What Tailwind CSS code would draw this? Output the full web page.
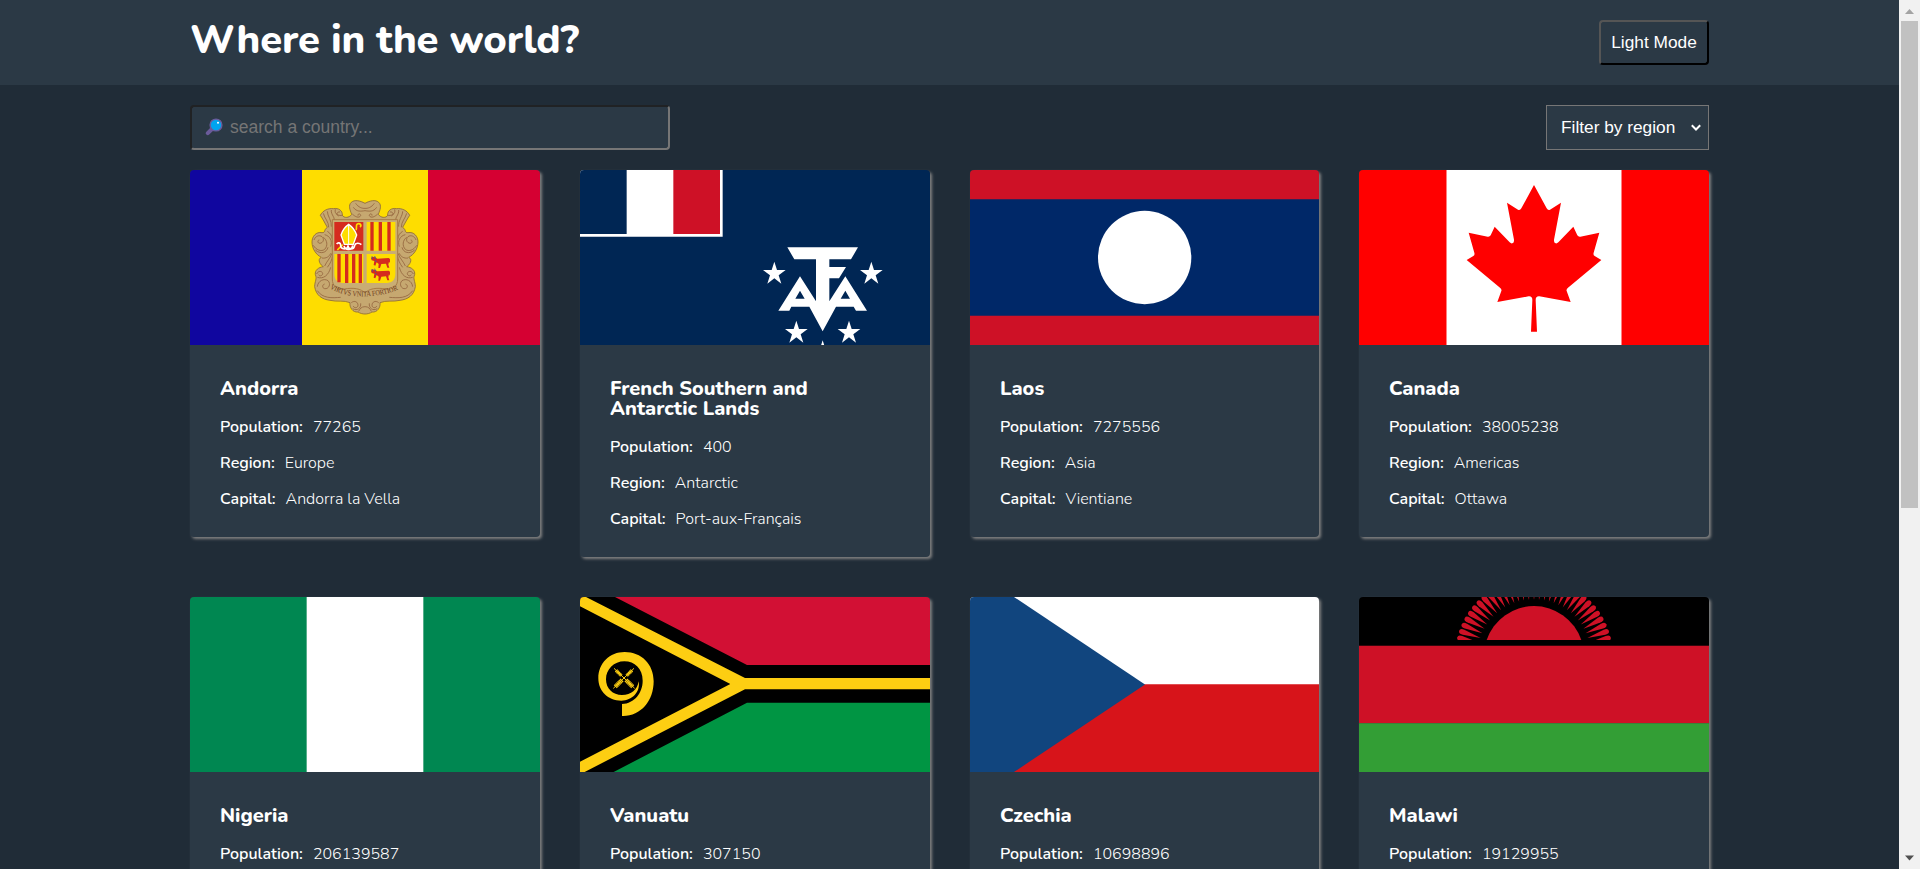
<!DOCTYPE html>
<html lang="en">
<head>
<meta charset="utf-8">
<title>Where in the world?</title>
<script src="https://cdn.jsdelivr.net/npm/@tailwindcss/browser@4"></script>
</head>
<body class="flex h-[869px] overflow-hidden bg-[#202c37] font-['Nunito','Lato',sans-serif] text-white">
<div class="h-full min-w-0 flex-1 overflow-hidden">
  <header class="flex h-[85px] items-start justify-between bg-[#2b3945] px-[190px] pt-5">
    <h1 class="text-[40px] leading-10 font-extrabold tracking-[-0.12px] whitespace-nowrap">Where in the world?</h1>
    <button class="h-[45px] w-[110px] rounded border-2 border-t-[#555] border-l-[#555] border-r-black border-b-black bg-[#2b3945] font-['Liberation_Sans',sans-serif] text-[17.3px] whitespace-nowrap">Light Mode</button>
  </header>
  <main class="px-[190px] pt-5">
    <div class="flex justify-between">
      <div class="flex h-[45px] w-[480px] items-center gap-[7px] rounded border-2 border-t-[#202224] border-l-[#202224] border-r-[#767676] border-b-[#767676] bg-[#2b3945] pl-[13px] font-['Liberation_Sans',sans-serif] text-[17.5px] text-[#757575]">
        <svg class="-mt-0.5 h-[18px] w-[18px]" viewBox="0 0 18 18"><path d="M2.800 15.200 7 11" stroke="#6b5b9b" stroke-width="4" stroke-linecap="round"/><circle cx="11" cy="7" r="5.900" fill="#00a4ef" stroke="#6b5b9b" stroke-width="1.400"/><circle cx="13" cy="4.800" r="1" fill="#fff"/></svg>
        <span>search a country...</span>
      </div>
      <div class="flex h-[45px] w-[163px] items-center justify-between border border-[#767676] bg-[#2b3945] pr-[7px] pl-[14px] font-['Liberation_Sans',sans-serif] text-[17.3px] whitespace-nowrap">
        <span class="pt-px">Filter by region</span>
        <svg class="h-[10px] w-[10px]" viewBox="0 0 10 10"><path d="M.8 2.300 5 6.500l4.200-4.200" fill="none" stroke="#fff" stroke-width="2"/></svg>
      </div>
    </div>
    <section id="grid" class="mt-5 grid grid-cols-[350px_350px_349px_350px] items-start justify-between gap-y-10"></section>
  </main>
</div>
<aside class="flex w-[21px] shrink-0 flex-col items-center bg-[#f1f1f1]">
  <svg class="h-[21px] w-[21px] shrink-0" viewBox="0 0 21 21"><path d="M6 14l4.500-5 4.500 5z" fill="#a3a3a3"/></svg>
  <div class="h-[487px] w-[17px] bg-[#c1c1c1]"></div>
  <svg class="mt-auto h-[21px] w-[21px] shrink-0" viewBox="0 0 21 21"><path d="M6 7.500l4.500 5 4.500-5z" fill="#505050"/></svg>
</aside>

<svg class="hidden">
  <symbol id="andorra" viewBox="0 0 1050 525">
    <path fill="#10069f" d="M0 0h336v525H0z"/><path fill="#fedd00" d="M336 0h378v525H336z"/><path fill="#d50032" d="M714 0h336v525H714z"/>
    <path fill="#c6a870" stroke="#8c6a3a" stroke-width="2.500" d="M525 100C510 92 494 88 484 97C474 106 480 120 485 133C478 144 462 145 457 136C458 122 446 113 430 116C414 114 398 122 391 136C398 146 404 158 412 172C400 180 408 188 396 188C378 184 366 200 366 216C366 236 378 254 394 262C380 268 392 286 400 290C386 292 374 300 376 314C382 326 374 334 374 350C378 376 396 388 420 391C440 396 462 390 480 398C478 412 488 428 504 426C510 430 518 432 525 432C532 432 540 430 546 426C562 428 572 412 570 398C588 390 610 396 630 391C654 388 672 376 676 350C676 334 668 326 674 314C676 300 664 292 650 290C658 286 670 268 656 262C672 254 684 236 684 216C684 200 672 184 654 188C642 188 650 180 638 172C646 158 652 146 659 136C652 122 636 114 620 116C604 113 592 122 593 136C588 145 572 144 565 133C570 120 576 106 566 97C556 88 540 92 525 100z"/>
    <g id="scroll" fill="none" stroke="#94653f" stroke-width="2.500">
      <path d="M497 100c8 12 20 16 28 15M490 112c10 14 22 12 35 10M487 132c8 8 20 14 25 5c0-8-10-6-8 0M400 130c4 16 16 24 16 42M412 124c0 14 14 28 12 46M424 120c-2 16 14 20 8 42M436 118c-4 16 12 20 22 18M450 126c-8-2-14 8-4 12M372 210c4-12 16-16 24-10 8 8 4 18-6 20-8 0-8-10-2-10M370 226c8 14 24 20 34 12 10-10 8-28-4-36M376 240c16 14 34 8 38-8M404 194c16 4 24 18 18 36M412 184c10 6 14 14 14 22M396 264c12 2 22-4 26-14M404 288c6-14 16-22 22-38M412 292c8-10 14-22 16-36M380 312c4-10 16-10 18-2 0 8-10 10-12 4M382 322c18 6 34-6 40-30M382 350c2-18 20-26 32-18 10 10 2 26-10 24-8-2-8-12 0-14M382 362c16 24 44 22 70 20M484 398c10-8 20-2 20 8 0 8-12 10-14 2M488 416c14 8 26-2 24-16M506 424c4-8 8-14 19-14"/>
    </g>
    <use href="#scroll" transform="matrix(-1 0 0 1 1050 0)"/>
    <path fill="#c9ad74" stroke="#a77b45" stroke-width="3" d="M427 149h196v178c0 22-14 32-36 30-28-5-50-1-62 12-12-13-34-17-62-12-22 2-36-8-36-30z"/>
    <path fill="#d52b1e" d="M433 156h87v86h-87z"/><path fill="#fedd00" d="M530 156h86v86h-86zM433 252h87v87h-56c-20 0-31-8-31-28zM530 252h86v59c0 20-11 28-31 28h-55z"/>
    <path stroke="#d52b1e" stroke-width="10" d="M546 156v86M571 156v86M597 156v86M447 252v85M470 252v87M491 252v87M511 252v87"/>
    <path fill="#fedd00" stroke="#fff" stroke-width="4" d="M476 163c-12 8-20 22-23 32l10 28h27l10-28c-4-12-12-24-24-32z"/>
    <path stroke="#fff" stroke-width="3" d="M476 165v58"/>
    <path fill="none" stroke="#fedd00" stroke-width="5" d="M498 180c4-6-2-14 4-18 8-4 14 4 8 9M458 224l-16 16"/>
    <path fill="none" stroke="#fff" stroke-width="5" d="M440 222c4-6 12-4 12 4 0 14 22 14 22 0 0 14 18 14 20 0 2-8 14-8 20-2M462 228c4 14 24 14 26-2"/>
    <g id="cow"><path fill="#d52b1e" d="M546 260l10 2 6 4 34-2 4 3v12l-3-4-2 9 3 9h-6l-4-12-14 1-4 12h-5l1-12-6-5-4 10-5-2 2-12-8-2-2-6z"/><path stroke="#2f63a8" stroke-width="2.500" d="M546 259l1 8M554 258l3 9M556 271l3 5"/></g>
    <use href="#cow" y="38"/>
    <path id="motto" fill="none" d="M419 355c50 28 90 24 106 24s64-2 112-26"/>
    <text class="font-['Liberation_Serif',serif]" font-size="23" fill="#6e3a1c"><textPath href="#motto" textLength="212" lengthAdjust="spacingAndGlyphs">VIRTVS VNITA FORTIOR</textPath></text>
  </symbol>
  <symbol id="taaf" viewBox="0 0 1050 525">
    <path fill="#002654" d="M0 0h1050v525H0z"/><path fill="#fff" d="M0 0h428v200H0z"/><path fill="#002654" d="M0 0h140v192H0z"/><path fill="#ce1126" d="M280 0h140v192H280z"/>
    <g fill="#fff"><path fill-rule="evenodd" d="M622 232h212l-21 36h-65v23h50l-21 34h-29v69l48-75 65 103h-33l-7-12h-53l-40 74-40-74h-54l-6 12h-33l65-103 48 75V268h-65zM660 362l-14 24h28zM796 362l-14 24h28z"/>
    <path id="st" d="M583 275l8 25h26l-21 16 8 25-21-16-21 16 8-25-21-16h26z"/><use href="#st" x="291"/><use href="#st" x="66" y="177"/><use href="#st" x="224" y="177"/><use href="#st" x="145" y="236"/></g>
  </symbol>
  <symbol id="laos" viewBox="0 0 1050 525"><path fill="#ce1126" d="M0 0h1050v525H0z"/><path fill="#002868" d="M0 87.500h1050v350H0z"/><circle cx="524" cy="262.500" r="140" fill="#fff"/></symbol>
  <symbol id="canada" viewBox="0 0 1050 525"><path fill="#f00" d="M0 0h1050v525H0z"/><path fill="#fff" d="M262.500 0h525v525h-525z"/>
    <path fill="#f00" d="M525 45L563 115Q567 122 573 119L606 98L585 209Q584 219 590 220Q594 221 598 217L643 170L655 196Q658 201 664 200L721 188L704 248Q702 256 707 258L727 270L627 353Q621 358 623 363L635 396L541 379Q530 378 530 390L534 485H516L520 390Q520 378 509 379L415 396L427 363Q429 358 423 353L323 270L343 258Q348 256 346 248L329 188L386 200Q392 201 395 196L407 170L452 217Q456 221 460 220Q466 219 465 209L444 98L477 119Q483 122 487 115z"/></symbol>
  <symbol id="nigeria" viewBox="0 0 1050 525"><path fill="#008751" d="M0 0h1050v525H0z"/><path fill="#fff" d="M350 0h350v525H350z"/></symbol>
  <symbol id="vanuatu" viewBox="0 0 1050 525"><path fill="#d21034" d="M0 0h1050v262H0z"/><path fill="#009543" d="M0 262h1050v263H0z"/>
    <path d="M0 0h105l396 204h549v113H501L101 525H0z"/><path fill="#fdce12" d="M0 0h18l477 243h555v34H495L14 525H0v-31l451-233L0 28z"/>
    <path fill="#fdce12" fill-rule="evenodd" d="M126 357v-36c38-2 62-34 62-70 0-36-24-58-55-58s-55 24-55 54c0 28 20 47 48 47 28 0 46-16 50-41 6 32-20 58-52 58-40 0-69-28-69-67 0-46 34-79 79-79 50 0 87 36 87 88 0 60-40 106-95 104z"/>
    <g id="fern" stroke="#fdce12"><path stroke-width="3" d="M102 214l62 60"/><path stroke-width="10" stroke-dasharray="4 1" d="M108 220l16 16"/><path stroke-width="13" stroke-dasharray="4 1" d="M138 249l20 20"/></g><use href="#fern" transform="matrix(-1 0 0 1 264 0)"/>
  </symbol>
  <symbol id="czechia" viewBox="0 0 1050 525"><path fill="#fff" d="M0 0h1050v525H0z"/><path fill="#d7141a" d="M0 262h1050v263H0z"/><path fill="#11457e" d="M0 0h132l393 262.500L132 525H0z"/></symbol>
  <symbol id="malawi" viewBox="0 0 1050 525"><path d="M0 0h1050v146H0z"/>
    <g id="rays" fill="#ce1126"></g><path fill="#ce1126" d="M383 129a150 150 0 0 1 284 0z"/><path d="M0 129h1050v17H0z"/>
    <path fill="#ce1126" d="M0 146h1050v233H0z"/><path fill="#339e35" d="M0 379h1050v146H0z"/>
  </symbol>
</svg>
<script>
const countries = [
  ['Andorra', '77265', 'Europe', 'Andorra la Vella', 'andorra'],
  ['French Southern and Antarctic Lands', '400', 'Antarctic', 'Port-aux-Français', 'taaf'],
  ['Laos', '7275556', 'Asia', 'Vientiane', 'laos'],
  ['Canada', '38005238', 'Americas', 'Ottawa', 'canada'],
  ['Nigeria', '206139587', 'Africa', 'Abuja', 'nigeria'],
  ['Vanuatu', '307150', 'Oceania', 'Port Vila', 'vanuatu'],
  ['Czechia', '10698896', 'Europe', 'Prague', 'czechia'],
  ['Malawi', '19129955', 'Africa', 'Lilongwe', 'malawi'],
];
const row = (label, value) => `<p class="mt-5 flex gap-[10px] text-base leading-4"><b class="font-semibold">${label}:</b><span class="font-light">${value}</span></p>`;
document.getElementById('grid').innerHTML = countries.map(([name, pop, region, capital, flag]) => `
  <article class="overflow-hidden rounded bg-[#2b3945] shadow-[2px_2px_3px_#808080]">
    <svg class="block h-[175px] w-[350px]" viewBox="0 0 1050 525"><use href="#${flag}" width="1050" height="525"/></svg>
    <div class="px-[30px] pt-[34px] pb-[30px]">
      <h2 class="w-[240px] text-xl leading-5 font-extrabold">${name}</h2>
      ${row('Population', pop)}${row('Region', region)}${row('Capital', capital)}
    </div>
  </article>`).join('');
// Thirty-one tapered rays fanned around the rising sun
document.getElementById('rays').innerHTML = Array.from({length: 31}, (_, i) =>
  `<path transform="rotate(${(i - 15) * 5.1} 525 177)" d="M525 8l8-54q1-14-8-14t-8 14z"/>`).join('');
</script>
</body>
</html>
